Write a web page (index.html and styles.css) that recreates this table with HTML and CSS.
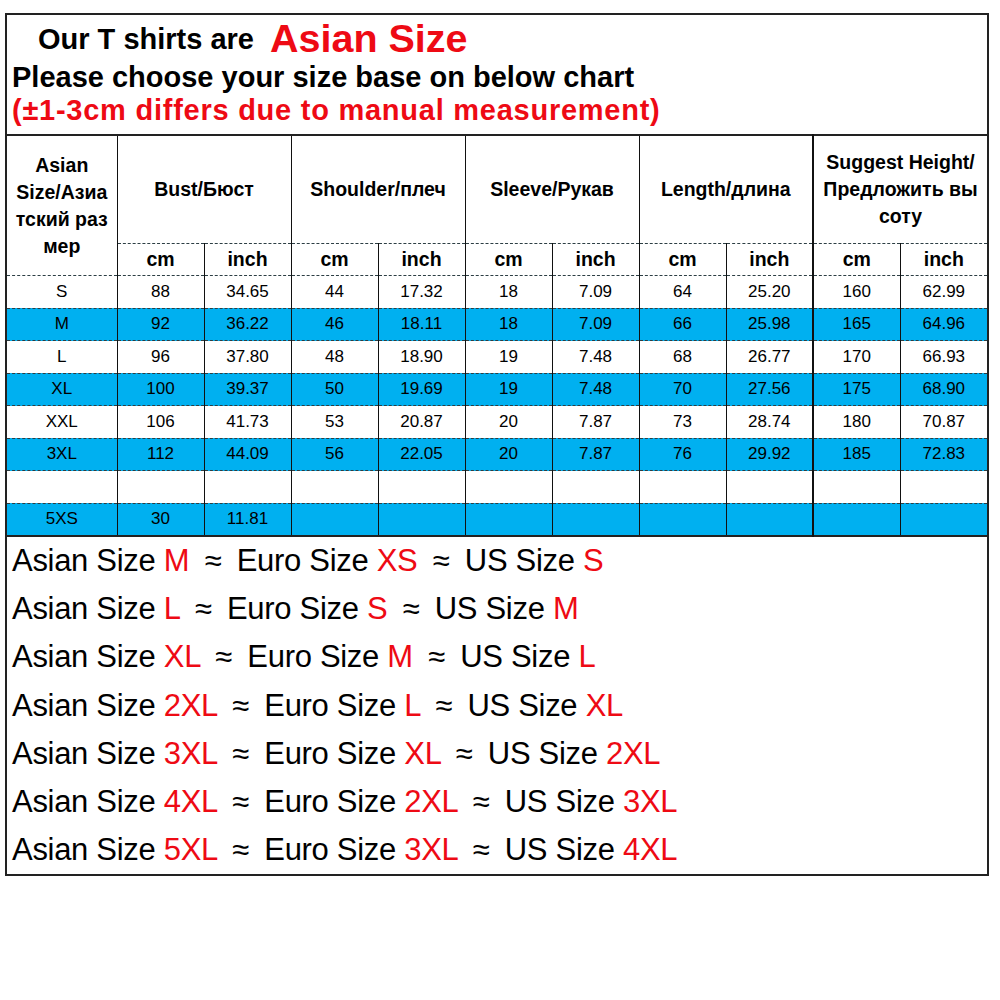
FILE: index.html
```html
<!DOCTYPE html>
<html>
<head>
<meta charset="utf-8">
<link rel="stylesheet" href="styles.css">
</head>
<body>
<div class="sheet">
  <div class="title">
    <div class="l1"><span class="lead">Our T shirts are</span><span class="big">Asian Size</span></div>
    <div class="l2">Please choose your size base on below chart</div>
    <div class="l3">(±1-3cm differs due to manual measurement)</div>
  </div>
  <table class="chart">
    <colgroup>
      <col class="c-size">
      <col class="c"><col class="c"><col class="c"><col class="c"><col class="c">
      <col class="c"><col class="c"><col class="c"><col class="c"><col class="c">
    </colgroup>
    <thead>
      <tr class="h1">
        <th rowspan="2" class="first">Asian<br>Size/Азиа<br>тский раз<br>мер</th>
        <th colspan="2">Bust/Бюст</th>
        <th colspan="2">Shoulder/плеч</th>
        <th colspan="2">Sleeve/Рукав</th>
        <th colspan="2">Length/длина</th>
        <th colspan="2" class="sugg">Suggest Height/<br>Предложить вы<br>соту</th>
      </tr>
      <tr class="h2">
        <th>cm</th><th>inch</th><th>cm</th><th>inch</th><th>cm</th><th>inch</th><th>cm</th><th>inch</th><th class="sugg">cm</th><th>inch</th>
      </tr>
    </thead>
    <tbody>
      <tr><td class="first">S</td><td>88</td><td>34.65</td><td>44</td><td>17.32</td><td>18</td><td>7.09</td><td>64</td><td>25.20</td><td class="sugg">160</td><td>62.99</td></tr>
      <tr class="blue"><td class="first">M</td><td>92</td><td>36.22</td><td>46</td><td>18.11</td><td>18</td><td>7.09</td><td>66</td><td>25.98</td><td class="sugg">165</td><td>64.96</td></tr>
      <tr><td class="first">L</td><td>96</td><td>37.80</td><td>48</td><td>18.90</td><td>19</td><td>7.48</td><td>68</td><td>26.77</td><td class="sugg">170</td><td>66.93</td></tr>
      <tr class="blue"><td class="first">XL</td><td>100</td><td>39.37</td><td>50</td><td>19.69</td><td>19</td><td>7.48</td><td>70</td><td>27.56</td><td class="sugg">175</td><td>68.90</td></tr>
      <tr><td class="first">XXL</td><td>106</td><td>41.73</td><td>53</td><td>20.87</td><td>20</td><td>7.87</td><td>73</td><td>28.74</td><td class="sugg">180</td><td>70.87</td></tr>
      <tr class="blue"><td class="first">3XL</td><td>112</td><td>44.09</td><td>56</td><td>22.05</td><td>20</td><td>7.87</td><td>76</td><td>29.92</td><td class="sugg">185</td><td>72.83</td></tr>
      <tr><td class="first"></td><td></td><td></td><td></td><td></td><td></td><td></td><td></td><td></td><td class="sugg"></td><td></td></tr>
      <tr class="blue last"><td class="first">5XS</td><td>30</td><td>11.81</td><td></td><td></td><td></td><td></td><td></td><td></td><td class="sugg"></td><td></td></tr>
    </tbody>
  </table>
  <div class="conv">
    <div class="line">Asian Size <span class="r">M</span> <span class="ap">≈</span> Euro Size <span class="r">XS</span> <span class="ap">≈</span> US Size <span class="r">S</span></div>
    <div class="line">Asian Size <span class="r">L</span> <span class="ap">≈</span> Euro Size <span class="r">S</span> <span class="ap">≈</span> US Size <span class="r">M</span></div>
    <div class="line">Asian Size <span class="r">XL</span> <span class="ap">≈</span> Euro Size <span class="r">M</span> <span class="ap">≈</span> US Size <span class="r">L</span></div>
    <div class="line">Asian Size <span class="r">2XL</span> <span class="ap">≈</span> Euro Size <span class="r">L</span> <span class="ap">≈</span> US Size <span class="r">XL</span></div>
    <div class="line">Asian Size <span class="r">3XL</span> <span class="ap">≈</span> Euro Size <span class="r">XL</span> <span class="ap">≈</span> US Size <span class="r">2XL</span></div>
    <div class="line">Asian Size <span class="r">4XL</span> <span class="ap">≈</span> Euro Size <span class="r">2XL</span> <span class="ap">≈</span> US Size <span class="r">3XL</span></div>
    <div class="line">Asian Size <span class="r">5XL</span> <span class="ap">≈</span> Euro Size <span class="r">3XL</span> <span class="ap">≈</span> US Size <span class="r">4XL</span></div>
  </div>
</div>
</body>
</html>
```

FILE: styles.css
```css
html, body {
  margin: 0;
  padding: 0;
  background: #fff;
}
body {
  font-family: "Liberation Sans", Arial, sans-serif;
  color: #000;
}
.sheet {
  margin: 13px 0 0 5px;
  width: 980px;
  border: 2px solid #222;
}
.title {
  height: 119px;
  box-sizing: border-box;
  padding-left: 5px;
}
.l1 {
  height: 45px;
  display: flex;
  align-items: flex-end;
  padding-left: 26px;
  box-sizing: border-box;
  padding-bottom: 2px;
}
.lead {
  font-size: 29px;
  font-weight: bold;
  line-height: 1;
  padding-bottom: 4px;
}
.big {
  margin-left: 16px;
  font-size: 39.5px;
  font-weight: bold;
  color: #ee0a14;
  line-height: 1;
}
.l2 {
  height: 34px;
  line-height: 34px;
  font-size: 29px;
  font-weight: bold;
}
.l3 {
  height: 32px;
  line-height: 32px;
  font-size: 29px;
  letter-spacing: 0.75px;
  font-weight: bold;
  color: #ee0a14;
}
.chart {
  width: 980px;
  border-collapse: collapse;
  table-layout: fixed;
  border-top: 2px solid #222;
  border-bottom: 2px solid #222;
}
.c-size { width: 110px; }
.c { width: 87px; }
.chart th, .chart td {
  padding: 0;
  text-align: center;
  border-left: 1px solid #111;
}
.chart .first { border-left: none; }
.chart .sugg { border-left: 2px solid #111; }
.chart th {
  font-weight: bold;
  font-size: 19.5px;
  line-height: 27px;
}
.h1 th { height: 107px; }
.h2 th {
  height: 31px;
  border-top: 1px dashed #2c3e44;
}
.chart td {
  font-size: 17px;
  height: 31.5px;
  border-top: 1px dashed #2c3e44;
}
.chart tr.blue td { background: #00b0f0; }
.conv {
  padding-left: 5px;
}
.line {
  height: 48.2px;
  line-height: 48px;
  font-size: 31px;
  letter-spacing: -0.3px;
  white-space: nowrap;
}
.ap {
  display: inline-block;
  margin: 0 7px;
}
.r { color: #ee0a14; }
```
